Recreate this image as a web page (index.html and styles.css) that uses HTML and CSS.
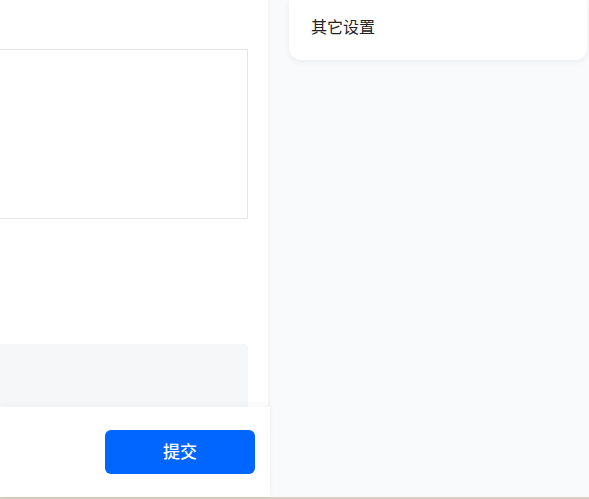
FILE: index.html
```html
<!DOCTYPE html>
<html lang="zh-CN">
<head>
  <meta charset="UTF-8">
  <meta name="viewport" content="width=device-width, initial-scale=1.0">
  <title>表单</title>
  <link rel="stylesheet" href="styles.css">
</head>
<body>

  <div id="page">
    <div class="form-panel">
      <div class="text-box"></div>
      <div class="tip-block"></div>
      <div class="action-bar">
        <button class="submit-btn">提交</button>
      </div>
    </div>

    <div class="side-panel">
      <div class="setting-card">其它设置</div>
    </div>
  </div>

  <div class="bottom-line"></div>

</body>
</html>
```

FILE: styles.css
```css
body {
  font-family: "Noto Sans CJK SC", "Noto Sans", sans-serif;
  margin: 0;
  padding: 0;
  background-color: #f8fafc;
  overflow: hidden;
}

#page {
  display: flex;
  height: 497px;
}

.form-panel {
  width: 268px;
  display: flex;
  flex-direction: column;
  background-color: #fff;
  box-shadow: 1px 0 4px rgba(0, 0, 0, 0.04);
  position: relative;
  z-index: 1;
}

.text-box {
  margin: 49px 20px 0 -1px;
  height: 168px;
  border: 1px solid #e6e6e6;
}

.tip-block {
  margin: 125px 20px 0 0;
  height: 63px;
  background-color: #f5f7f9;
  border-radius: 0 4px 0 0;
}

.action-bar {
  flex: 1;
  margin-right: -2px;
  display: flex;
  justify-content: flex-end;
  align-items: flex-start;
  padding: 23px 15px 0 0;
  background-color: #fff;
  box-shadow: 0 -2px 6px rgba(0, 0, 0, 0.04);
}

.submit-btn {
  width: 150px;
  height: 44px;
  padding: 0 0 3px;
  border: none;
  border-radius: 6px;
  background-color: #0066ff;
  color: #fff;
  font-family: inherit;
  font-size: 17px;
  font-weight: 500;
  cursor: pointer;
}

.side-panel {
  flex: 1;
  padding: 0 2px 0 21px;
}

.setting-card {
  background-color: #fff;
  border-radius: 0 0 12px 12px;
  padding: 15px 22px 23px;
  line-height: 22px;
  font-size: 16px;
  font-weight: 400;
  color: #222;
  box-shadow: 0 2px 6px rgba(0, 0, 0, 0.06);
}

.bottom-line {
  height: 2px;
  background-color: #d8cfc0;
}
```
